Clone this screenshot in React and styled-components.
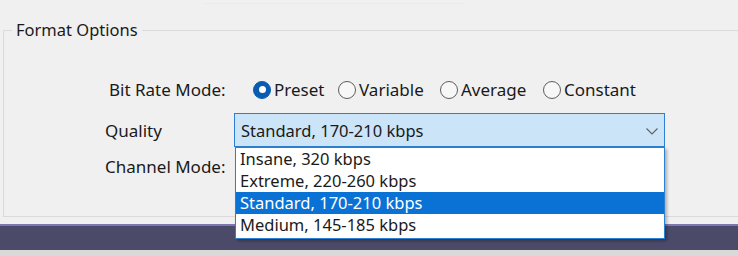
import React from "react";
import styled, { createGlobalStyle } from "styled-components";

const Global = createGlobalStyle`
  html, body { margin: 0; padding: 0; background: #f0f0f0; }
  body { font-family: "Noto Sans", "Open Sans", sans-serif; color: #1a1a1a; }
  * { box-sizing: border-box; }
`;

const Page = styled.div`
  width: 738px;
  height: 256px;
  display: flex;
  flex-direction: column;
  overflow: hidden;
  background: #f0f0f0;
`;

const Content = styled.div`
  height: 224px;
  display: flex;
  flex-direction: column;
`;

const FaintEdge = styled.div`
  margin: 3px 0 0 205px;
  width: 260px;
  height: 1px;
  background: #e9e9e9;
`;

const GroupBox = styled.fieldset`
  margin: 15px 0 0 3px;
  padding: 0;
  height: 198px;
  border: 1px solid #dadada;
  border-right: none;
  min-inline-size: 0;
  width: 800px;
`;

const Legend = styled.legend`
  margin-left: 8px;
  padding: 0 4px;
  font-size: 16.5px;
  line-height: 22px;
  color: #1a1a1a;
`;

const Rows = styled.div`
  display: flex;
  flex-direction: column;
  padding-left: 101px;
`;

const Row = styled.div`
  display: grid;
  grid-template-columns: 129px 431px;
  align-items: center;
  margin-top: ${(p) => p.$mt}px;
  height: ${(p) => p.$h}px;
`;

const Label = styled.span`
  font-size: 17px;
  padding-left: ${(p) => p.$indent || 0}px;
  white-space: nowrap;
`;

const RadioGroup = styled.div`
  display: flex;
  align-items: center;
  padding-left: 19px;
`;

const RadioItem = styled.label`
  display: flex;
  align-items: center;
  gap: 3px;
  width: ${(p) => (p.$w ? `${p.$w}px` : "auto")};
  flex: none;
  font-size: 17px;
  white-space: nowrap;
`;

const Circle = styled.span`
  width: 18px;
  height: 18px;
  border-radius: 50%;
  flex: none;
  display: flex;
  align-items: center;
  justify-content: center;
  background: ${(p) => (p.$checked ? "#0a5cb0" : "#f7f7f7")};
  border: 1px solid ${(p) => (p.$checked ? "#0a5cb0" : "#5d5d5d")};
  &::after {
    content: "";
    display: ${(p) => (p.$checked ? "block" : "none")};
    width: 7px;
    height: 7px;
    border-radius: 50%;
    background: #fff;
  }
`;

const ComboWrap = styled.div`
  position: relative;
  height: 34px;
`;

const Combo = styled.div`
  height: 34px;
  display: flex;
  align-items: center;
  justify-content: space-between;
  padding: 0 6px 0 6px;
  background: #cce4f7;
  border: 1px solid #2d7fd3;
  font-size: 16.5px;
`;

const DropList = styled.ul`
  position: absolute;
  left: 1px;
  right: 0;
  top: 34px;
  margin: 0;
  padding: 0 0 2px;
  list-style: none;
  background: #fff;
  border: 1px solid #2d7fd3;
  box-shadow: 2px 2px 3px rgba(0, 0, 0, 0.28);
  z-index: 2;
`;

const Item = styled.li`
  height: 22px;
  line-height: 22px;
  padding-left: 4px;
  font-size: 16.5px;
  background: ${(p) => (p.$selected ? "#0a72d4" : "transparent")};
  color: ${(p) => (p.$selected ? "#fff" : "#1a1a1a")};
`;

const Taskbar = styled.div`
  height: 26px;
  background: #4b4a69;
  border-top: 2px solid #7d77b1;
`;

const BottomStrip = styled.div`
  flex: 1;
  background: #d9d9d9;
`;

const Chevron = () => (
  <svg width="12" height="7" viewBox="0 0 12 7" style={{ marginTop: 2 }}>
    <path d="M0.5 0.5 L6 6 L11.5 0.5" fill="none" stroke="#5f5f5f" strokeWidth="1.1" />
  </svg>
);

const options = [
  "Insane, 320 kbps",
  "Extreme, 220-260 kbps",
  "Standard, 170-210 kbps",
  "Medium, 145-185 kbps",
];

const radios = [
  { label: "Preset", checked: true, w: 85 },
  { label: "Variable", w: 102 },
  { label: "Average", w: 103 },
  { label: "Constant" },
];

export default function App() {
  return (
    <>
      <Global />
      <Page>
        <Content>
          <FaintEdge />
          <GroupBox>
            <Legend>Format Options</Legend>
            <Rows>
              <Row $mt={37} $h={22}>
                <Label $indent={4}>Bit Rate Mode:</Label>
                <RadioGroup>
                  {radios.map((r) => (
                    <RadioItem key={r.label} $w={r.w}>
                      <Circle $checked={r.checked} />
                      {r.label}
                    </RadioItem>
                  ))}
                </RadioGroup>
              </Row>
              <Row $mt={13} $h={34}>
                <Label>Quality</Label>
                <ComboWrap>
                  <Combo>
                    Standard, 170-210 kbps
                    <Chevron />
                  </Combo>
                  <DropList>
                    {options.map((o) => (
                      <Item key={o} $selected={o.startsWith("Standard")}>
                        {o}
                      </Item>
                    ))}
                  </DropList>
                </ComboWrap>
              </Row>
              <Row $mt={8} $h={22}>
                <Label>Channel Mode:</Label>
                <span />
              </Row>
            </Rows>
          </GroupBox>
        </Content>
        <Taskbar />
        <BottomStrip />
      </Page>
    </>
  );
}
